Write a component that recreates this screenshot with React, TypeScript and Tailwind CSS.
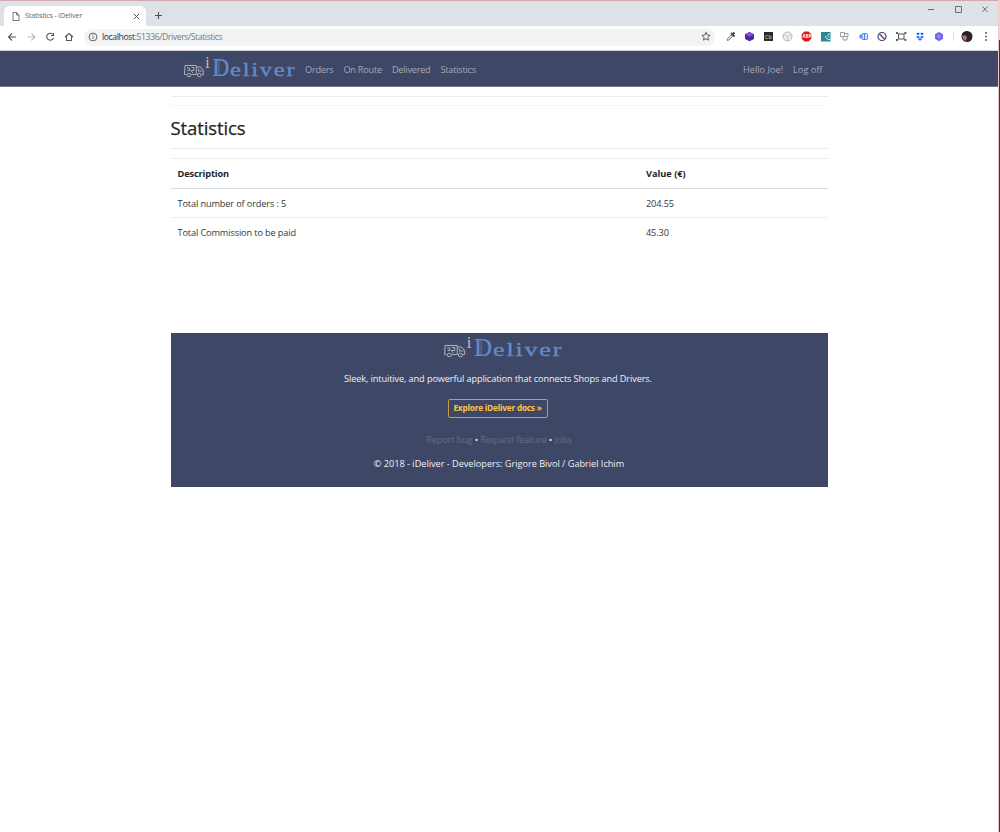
import React from 'react';

function Logo({ width = 113 }: { width?: number }) {
  return (
    <svg width={width} height="34" viewBox="0 -5 114 34" preserveAspectRatio="none" className="block shrink-0 overflow-visible" fontFamily="Liberation Serif, serif">
      <rect x="1" y="7" width="24" height="17" fill="#4a4d66" opacity=".5" />
      <g fill="none" stroke="#b4b8c8" strokeWidth=".9">
        <path d="M4 19.500H2.500L3 10.500H14.500V19.500H9.500M14.500 12H18.500L21.500 15.500V19.500H20M16.500 13.500V16H20.500M5 13H7.500V15.500H5.500M9.500 12.500H12V15.500H9.500M8.500 15L11 18" />
        <ellipse cx="7" cy="20" rx="2" ry="1.700" />
        <ellipse cx="17.500" cy="20" rx="2" ry="1.700" />
      </g>
      <text x="23.500" y="12.500" fontSize="16" fill="#b9bdcc">i</text>
      <g fill="#628bc9" stroke="#628bc9">
        <text x="30.500" y="20.700" fontSize="25" strokeWidth=".2" textLength="17" lengthAdjust="spacingAndGlyphs">D</text>
        <path d="M37.200 5V20.500" strokeWidth=".7" />
        <text x="0" y="20.700" fontSize="19.500" strokeWidth=".35" textLength="51" lengthAdjust="spacing" transform="translate(48.500 0) scale(1.270 1)">eliver</text>
      </g>
    </svg>
  );
}

function BrowserIcons() {
  return (
    <svg width="300" height="22" viewBox="700 26 300 22" className="block shrink-0" fill="none" stroke="#5f6368">
      <path d="M706 32.300l1.200 2.700 2.900.3-2.200 2 .6 2.900-2.500-1.500-2.500 1.500.6-2.900-2.200-2 2.900-.3z" />
      <path d="M727 40.500l.5-2 3.500-3.500 1.500 1.500-3.500 3.500z" stroke="#8b8b8b" fill="#ddd" />
      <path d="M731 33l3.500 3.500M732 35l2.500-2.500" stroke="#444" strokeWidth="1.800" />
      <path d="M749.500 32l4.500 2.300v4.600l-4.500 2.400-4.500-2.400v-4.600z" fill="#5524a8" stroke="none" />
      <path d="M749.500 32l4.500 2.300-4.500 2.400-4.500-2.400z" fill="#8056d0" stroke="none" />
      <rect x="764" y="32" width="9" height="9" fill="#292b2d" stroke="none" />
      <text x="765" y="38.600" fill="#ddd" stroke="none" fontSize="5.500" fontFamily="Open Sans, sans-serif">Cb</text>
      <circle cx="787.500" cy="36.500" r="4.500" stroke="#b5b5b5" fill="#eee" />
      <path d="M784 34.500l3.500 2 3.500-2M787.500 36.500v4" stroke="#c5c5c5" />
      <path d="M804.500 31.500h4l2.800 2.800v4.400l-2.800 2.800h-4l-2.800-2.800v-4.400z" fill="#d71920" stroke="none" />
      <text x="802.600" y="38.300" fill="#fff" stroke="none" fontSize="4.300" fontWeight="700" fontFamily="Open Sans, sans-serif">ABP</text>
      <rect x="821" y="32" width="9.500" height="9.500" fill="#2b8797" stroke="none" />
      <path d="M830.500 34c-3-1-4 3-1 3.200M830.500 39.500c-3 .5-5-1-5-3.500" stroke="#d9edf0" />
      <path d="M840.500 32.500h4v4h-4zM844 33.500h4v3h-3M843 37v3h4v-3" stroke="#999" />
      <rect x="862" y="33.500" width="5.500" height="6" rx="1" stroke="#4285f4" fill="#d5e5ff" />
      <path d="M859.500 36.500l1.500-2v4zM864.500 34v5" stroke="#4285f4" fill="#4285f4" />
      <circle cx="882" cy="36.500" r="4" stroke="#3d4478" strokeWidth="1.200" />
      <path d="M879.500 34l5 5" stroke="#8a3d58" strokeWidth="1.500" />
      <rect x="898.500" y="34" width="5.500" height="5" stroke="#555" />
      <path d="M896.500 32.500l1.800 1.500M906 32.500L904 34M896.500 40.500l1.800-1.500M906 40.500L904 39M896.500 34v-1.500H898M904.500 32.500H906V34M896.500 39v1.500H898M904.500 40.500H906V39" stroke="#555" />
      <path d="M918 32.500l2 1.300-2 1.400-2-1.400zM922 32.500l2 1.300-2 1.400-2-1.400zM918 35.700l2 1.300-2 1.400-2-1.400zM922 35.700l2 1.300-2 1.400-2-1.400zM920 38l2 1.300-2 1.500-2-1.500z" fill="#1769ff" stroke="none" />
      <path d="M939 32l4 2.300v4.500l-4 2.400-4-2.400v-4.500z" fill="#7068df" stroke="none" />
      <circle cx="939" cy="36.500" r="1.300" stroke="#aaa6f5" />
      <path d="M953.500 32v9" stroke="#ddd" />
      <circle cx="967" cy="36.500" r="5.500" fill="#30262a" stroke="none" />
      <path d="M962 36l3-1 2 2-1 3-1 1-2-2z" fill="#a9746a" stroke="none" />
      <path d="M962 35c0-4 7-5 9-1l-5 1z" fill="#211f25" stroke="none" />
      <g fill="#4b4e52" stroke="none"><circle cx="986" cy="33" r=".9" /><circle cx="986" cy="36.500" r=".9" /><circle cx="986" cy="40" r=".9" /></g>
    </svg>
  );
}

function Browser() {
  return (
    <header className="h-[51px] border-t border-[#cfa9ad] bg-[#dee1e8]">
      <div className="flex h-[25px] items-end">
        <div className="ml-1 flex h-5 w-[142px] items-center rounded-t-md bg-white pl-2 text-[7px] tracking-[-0.1px] text-[#5f6368]">
          <svg width="8" height="9" viewBox="0 0 8 9" fill="none" stroke="#777" className="mr-[5px]"><path d="M1 .5h3.500l2.500 2.500v5.500H1zM4.500.500V3H7" /></svg>
          <span className="grow">Statistics - iDeliver</span>
          <svg width="7" height="7" viewBox="0 0 7 7" className="mr-[6px]" stroke="#4b4e52"><path d="M1 1l5 5M6 1L1 6" /></svg>
        </div>
        <svg width="9" height="9" viewBox="0 0 9 9" className="mb-[6px] ml-2" stroke="#4b4e52" strokeWidth="1.100"><path d="M4.500 1v7M1 4.500h7" /></svg>
        <svg width="64" height="12" viewBox="926 4 64 12" className="mb-[10px] ml-auto mr-[8px]" fill="none" stroke="#6b6d73"><path d="M928 9.500h6M955.500 6.500h6v6h-6zM982.500 6.500l5 5.500M987.500 6.500l-5 5.500" /></svg>
      </div>
      <div className="flex h-[25px] items-center border-b border-[#d3d5d9] bg-white pb-[2px]">
        <svg width="80" height="16" viewBox="0 29 80 16" fill="none" stroke="#55585c" strokeWidth="1.100" className="shrink-0">
          <path d="M16 37H8.500M12 33.500L8.500 37l3.500 3.500" />
          <path d="M27.500 37H35M31.500 33.500L35 37l-3.500 3.500" stroke="#b9bbbe" />
          <path d="M53 34.500a3.500 3.500 0 1 0 .5 3.500M53.500 33v2.500H51" />
          <path d="M65 37l4-3.500 4 3.500M66.500 36v4.500h5V36" />
        </svg>
        <div className="-mr-[12px] ml-[4px] flex h-[17px] w-[631px] shrink-0 items-center rounded-full bg-[#f1f3f4] pl-[4px] text-[8.700px] text-[#777b80]">
          <svg width="10" height="10" viewBox="0 0 10 10" fill="none" stroke="#5f6368" className="mr-[4px]"><circle cx="5" cy="5" r="3.900" /><path d="M5 4.500V7M5 2.500v1" /></svg>
          <span className="pt-px tracking-[-0.420px]"><span className="text-[#303236]">localhost</span>:51336/Drivers/Statistics</span>
        </div>
        <div className="-ml-[3px]"><BrowserIcons /></div>
      </div>
    </header>
  );
}

function Nav() {
  return (
    <nav className="flex h-[36px] items-center border-b border-[#6f7590] bg-[#3f4766] pl-[182px] pr-[175.500px] pt-px text-[9.200px] tracking-[-0.240px] text-[#a4a8ba]">
      <div className="-mt-[4px]"><Logo /></div>
      <div className="ml-[10px] flex gap-[10px] pt-px">
        <span>Orders</span><span>On Route</span><span>Delivered</span><span>Statistics</span>
      </div>
      <div className="ml-auto flex gap-[10px] pt-px tracking-[0px]"><span>Hello Joe!</span><span>Log off</span></div>
    </nav>
  );
}

export default function App() {
  return (
    <div className="flex h-[832px] w-[1000px] overflow-hidden bg-white font-['Open_Sans',sans-serif]">
      <div className="w-[998px] shrink-0 overflow-hidden">
        <Browser />
        <Nav />
        <main className="ml-[170.500px] w-[657px] pt-[9px] text-[9.200px] tracking-[-0.130px] text-[#34373b]">
          <div className="h-[10px] border-t border-b border-t-[#ececec] border-b-[#f6f6f6]" />
          <h1 className="flex h-[42px] items-center pt-[2px] text-[18.500px] font-medium tracking-[-0.100px] text-[#212529] [-webkit-text-stroke:0.25px_#212529]">Statistics</h1>
          <div className="h-[11px] border-y border-[#ececec]" />
          <table className="w-full table-fixed border-collapse text-left">
            <thead><tr className="h-[29px] border-b border-[#d9dcdf] text-[#212529]"><th className="w-[468px] p-0 pl-[7px] pt-[2px]">Description</th><th className="p-0 pl-[7.500px] pt-[2px] tracking-normal">Value (€)</th></tr></thead>
            <tbody>
              <tr className="h-[29px] border-b border-[#eceeef]"><td className="p-0 pl-[7px] pt-[2px]">Total number of orders : 5</td><td className="p-0 pl-[7.500px] pt-[2px]">204.55</td></tr>
              <tr className="h-[29px]"><td className="p-0 pl-[7px] pt-[2px]">Total Commission to be paid</td><td className="p-0 pl-[7.500px] pt-[2px]">45.30</td></tr>
            </tbody>
          </table>
          <footer className="mt-[87.400px] flex h-[153.600px] flex-col items-center bg-[#3f4766] pr-[2px] text-[9.200px] text-[#f0f1f5]">
            <div className="-mt-[3px] ml-[8px]"><Logo width={120} /></div>
            <p className="mt-[6.600px] h-4 leading-4 tracking-[-0.115px]">Sleek, intuitive, and powerful application that connects Shops and Drivers.</p>
            <button className="mr-[1px] mt-[12px] h-[19px] w-[100px] rounded-[2px] border border-[#c99b43] text-[8.300px] font-bold leading-4 tracking-[-0.230px] text-[#ffc34b]">Explore iDeliver docs »</button>
            <p className="ml-[2px] mt-[14px] h-4 leading-4 tracking-[-0.140px]"><span className="text-[#666c80]">Report bug</span> • <span className="text-[#666c80]">Request feature</span> • <span className="text-[#666c80]">Jobs</span></p>
            <p className="ml-[2px] mt-[8px] h-4 leading-4 tracking-[-0.030px]">© 2018 - iDeliver - Developers: Grigore Bivol / Gabriel Ichim</p>
          </footer>
        </main>
      </div>
      <div className="w-px bg-[#edc6c6]" />
      <div className="flex w-px flex-col"><div className="h-10 bg-[#edd6d8]" /><div className="grow bg-[#4b3031]" /></div>
    </div>
  );
}
